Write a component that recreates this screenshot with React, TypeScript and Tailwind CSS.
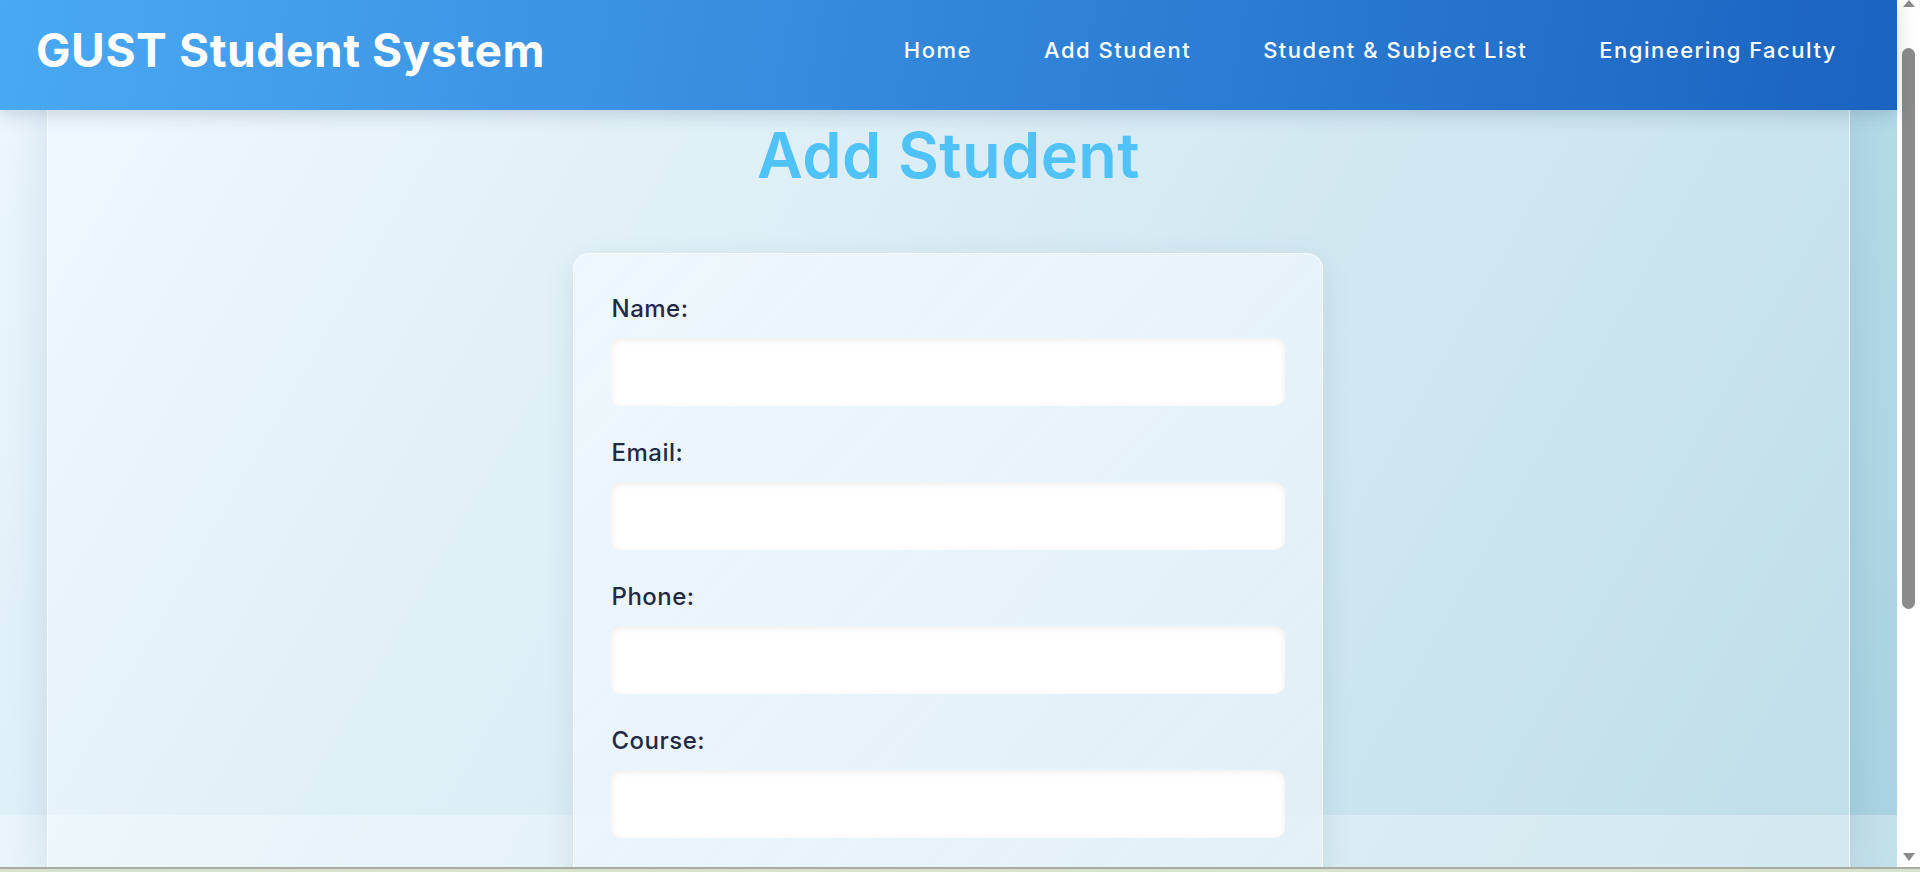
const navLinks = ["Home", "Add Student", "Student & Subject List", "Engineering Faculty"];

const fields = ["Name:", "Email:", "Phone:", "Course:"];

function Scrollbar() {
  return (
    <div className="flex w-[23px] shrink-0 flex-col items-center bg-white">
      <svg width="14" height="8" viewBox="0 0 14 8">
        <path d="M7 0 L13 7 L1 7 Z" fill="#8b8b8b" />
      </svg>
      <div className="mt-[40px] h-[561px] w-[13px] rounded-full bg-[#8b8b8b]" />
      <div className="flex-1" />
      <svg width="14" height="10" viewBox="0 0 14 10" className="mb-[5px]">
        <path d="M1 1 L13 1 L7 9 Z" fill="#8b8b8b" />
      </svg>
    </div>
  );
}

export default function App() {
  return (
    <div className="flex h-[872px] w-[1920px] flex-col overflow-hidden font-['Inter',sans-serif]">
      <div className="flex h-[867px] shrink-0">
        <div className="flex w-[1897px] shrink-0 flex-col">
          <header className="relative z-10 flex h-[110px] shrink-0 items-center justify-between bg-[linear-gradient(100deg,#4aa9f3,#1a63c0)] pb-[9px] pl-[36px] pr-[60px] shadow-[0_4px_18px_rgba(0,40,80,0.18)]">
            <h1 className="text-[46px] font-bold tracking-[0.6px] text-white">GUST Student System</h1>
            <nav className="flex items-center gap-[72px]">
              {navLinks.map((link) => (
                <a key={link} className="text-[22px] font-medium tracking-[1.5px] text-white">
                  {link}
                </a>
              ))}
            </nav>
          </header>
          <main className="min-h-0 flex-1 overflow-hidden bg-[linear-gradient(to_bottom,transparent_705px,rgba(255,255,255,0.3)_705px),linear-gradient(120deg,#ebf6fd,#a8d3e2)]">
            <div className="mx-auto h-full w-[95%] border-x border-white/70 bg-white/25 shadow-[0_0_40px_rgba(0,60,100,0.12)]">
              <h2 className="pt-[14px] text-center text-[63px] leading-none font-semibold tracking-[0.4px] text-[#4fc3f7]">Add Student</h2>
              <form className="mx-auto mt-[66px] h-[700px] w-[750px] rounded-2xl border border-white/70 bg-[linear-gradient(135deg,rgba(240,247,253,0.9),rgba(228,241,248,0.8))] px-[37px] pt-[37px] shadow-[0_8px_30px_rgba(0,60,100,0.1)]">
                {fields.map((field) => (
                  <div key={field} className="mb-[29px]">
                    <label className="block text-[24px] leading-[36px] font-medium tracking-[0.5px] text-[#1f2a44]">{field}</label>
                    <input
                      type="text"
                      className="mt-[11px] block h-[68px] w-full rounded-[10px] bg-white shadow-[inset_0_2px_6px_rgba(120,100,80,0.12)] outline-none"
                    />
                  </div>
                ))}
              </form>
            </div>
          </main>
        </div>
        <Scrollbar />
      </div>
      <div className="h-[2px] shrink-0 bg-[#a9aca5]" />
      <div className="h-[3px] shrink-0 bg-[#d7e3cc]" />
    </div>
  );
}
